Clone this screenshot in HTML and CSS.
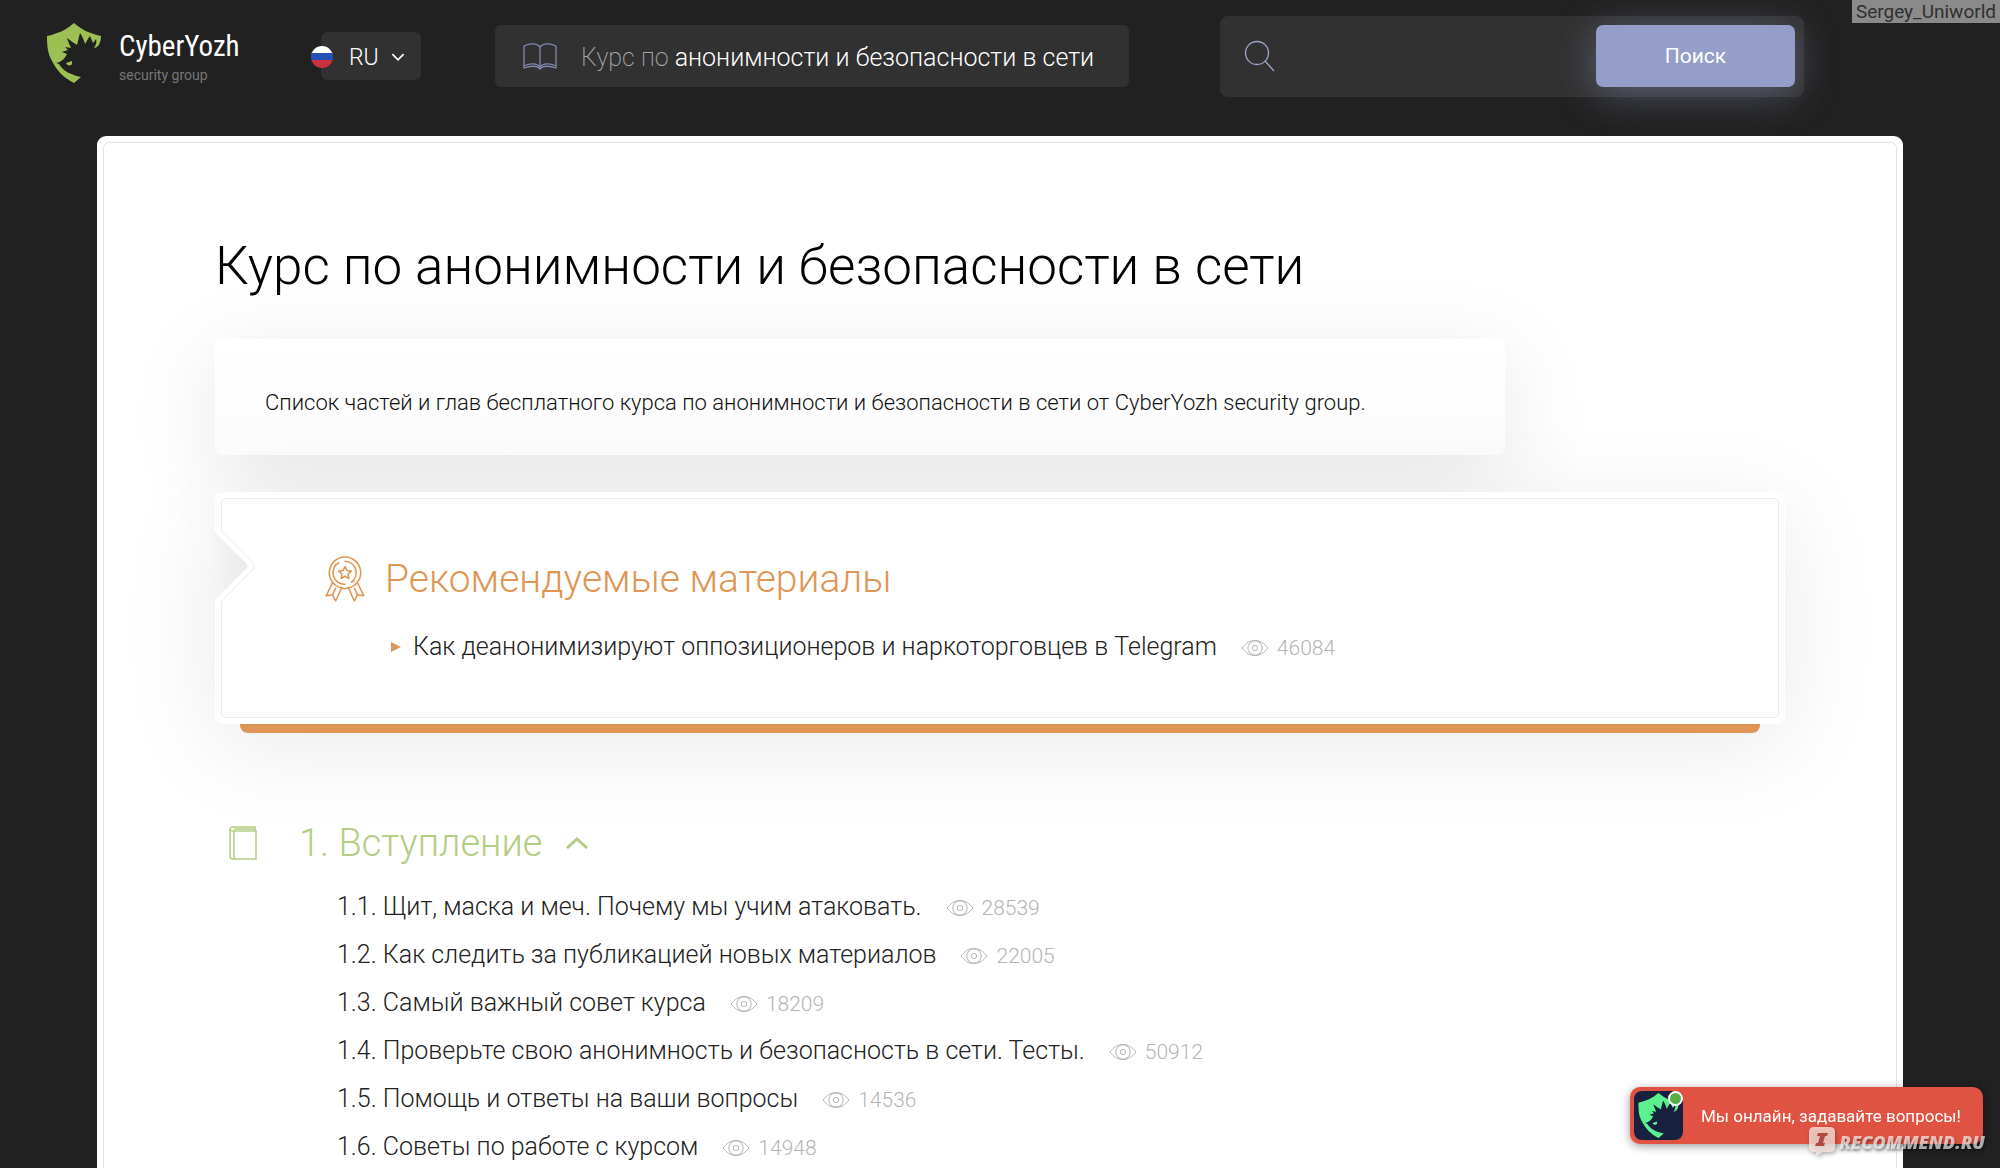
FILE: index.html
```html
<!DOCTYPE html>
<html lang="ru">
<head>
<meta charset="utf-8">
<title>Курс по анонимности и безопасности в сети</title>
<link rel="stylesheet" href="styles.css">
</head>
<body>
<svg class="sprite" aria-hidden="true">
  <symbol id="eye" viewBox="0 0 28 18">
    <path d="M1 9C5 4 9 1.500 14 1.500S23 4 27 9C23 14 19 16.500 14 16.500S5 14 1 9Z"/>
    <circle cx="14" cy="9" r="7.200"/>
    <circle cx="14" cy="9" r="2.600"/>
  </symbol>
  <symbol id="shield" viewBox="0 0 54 60">
    <path d="M27 0C19 7 10 11 0 13C0 24 1 31 5 38C10 48 17 55 27 60L34 54C24 52 16 48 12 41L9 40C15 39 18 35 20 31L15 29L21 27L18 24L24 25C23 22 21 19 20 15C24 18 27 20 30 22C31 18 32 14 33 10C36 14 37 18 38 21C40 18 41 15 43 13L46 20L49 16C50 19 49 22 47 25C51 25 54 20 54 13C44 11 35 7 27 0Z"/>
    <path d="M25 38L19 40C20 43 24 43 25 41Z"/>
  </symbol>
</svg>

<header class="top">
  <a class="logo" href="#">
    <svg class="logo-mark" aria-hidden="true"><use href="#shield"/></svg>
    <span class="logo-text">
      <span class="logo-name">CyberYozh</span>
      <span class="logo-sub">security group</span>
    </span>
  </a>
  <button class="lang" type="button">
    <svg class="flag" viewBox="0 0 22 22" aria-hidden="true">
      <clipPath id="round"><circle cx="11" cy="11" r="11"/></clipPath>
      <g clip-path="url(#round)">
        <rect width="22" height="8" fill="#fff"/>
        <rect y="7" width="22" height="8" fill="#2450b8"/>
        <rect y="14" width="22" height="8" fill="#c8313e"/>
      </g>
    </svg>
    RU
    <svg class="lang-arrow" viewBox="0 0 12 8" aria-hidden="true"><path d="M1 1l5 5 5-5"/></svg>
  </button>
  <a class="course" href="#">
    <svg class="course-icon" viewBox="0 0 34 28" aria-hidden="true">
      <path d="M17 4C14 0 7 0 1 3V25C6 23 14 22 17 26C20 22 28 23 33 25V3C27 0 20 0 17 4V24"/>
      <path d="M1 23C7 20 14 20 17 24C20 20 27 20 33 23"/>
    </svg>
    <span><span class="muted">Курс по</span> анонимности и безопасности в сети</span>
  </a>
  <form class="search" role="search">
    <label class="search-label" for="q" aria-label="Поиск по курсу">
      <svg class="search-icon" viewBox="0 0 32 32" aria-hidden="true"><circle cx="13" cy="13" r="11.500"/><path d="M21 21l9 10"/></svg>
    </label>
    <input class="search-input" id="q" type="text">
    <button class="search-button" type="button">Поиск</button>
  </form>
</header>

<main class="sheet">
  <div class="sheet-inner">
    <h1 class="title">Курс по анонимности и безопасности в сети</h1>
    <p class="intro">Список частей и глав бесплатного курса по анонимности и безопасности в сети от CyberYozh security group.</p>

    <section class="featured">
      <div class="featured-frame">
        <h2 class="featured-title">
          <svg class="award" viewBox="0 0 38 44" aria-hidden="true">
            <circle cx="19" cy="16" r="15"/>
            <path d="M13 6.500A11 11 0 0 0 19 27M25 25A11 11 0 0 0 19 5M10 8l.5.500M27 24l.5.500"/>
            <path d="M19 10l1.800 3.900 4.200.5-3.100 2.900.8 4.200-3.700-2.100-3.700 2.100.8-4.200-3.100-2.900 4.200-.5Z"/>
            <path d="M7 26L1 38l6-1 3 6 6-13M31 26l6 12-6-1-3 6-6-13M10 31l-3 6M28 31l3 6"/>
          </svg>
          Рекомендуемые материалы
        </h2>
        <ul class="featured-list">
          <li class="row"><a class="link" href="#">Как деанонимизируют оппозиционеров и наркоторговцев в Telegram</a><span class="views"><svg class="eye" aria-hidden="true"><use href="#eye"/></svg>46084</span></li>
        </ul>
      </div>
      <svg class="notch" viewBox="0 0 44 84" aria-hidden="true">
        <linearGradient id="shade"><stop offset="0" stop-color="#f4f4f4"/><stop offset="1" stop-color="#ebebeb"/></linearGradient>
        <path class="notch-cover" d="M0 6H8V78H0Z"/>
        <path d="M0 8L31 39Q34 42 31 45L0 76Z" fill="url(#shade)"/>
        <path class="notch-line" d="M6 5V6L38 39Q41 42 38 45L6 78V79"/>
      </svg>
    </section>

    <section class="part">
      <h2 class="part-title">
        <svg class="part-icon" viewBox="0 0 28 34" aria-hidden="true"><path d="M26 5V1H4Q1 1 1 4V30Q1 33 4 33H27V5H4Q1 5 1 3M5 5V33M5 3H26"/></svg>
        1. Вступление
        <svg class="part-arrow" viewBox="0 0 22 12" aria-hidden="true"><path d="M1 11L11 2l10 9"/></svg>
      </h2>
      <ul class="chapters">
        <li class="row"><a class="link" href="#">1.1. Щит, маска и меч. Почему мы учим атаковать.</a><span class="views"><svg class="eye" aria-hidden="true"><use href="#eye"/></svg>28539</span></li>
        <li class="row"><a class="link" href="#">1.2. Как следить за публикацией новых материалов</a><span class="views"><svg class="eye" aria-hidden="true"><use href="#eye"/></svg>22005</span></li>
        <li class="row"><a class="link" href="#">1.3. Самый важный совет курса</a><span class="views"><svg class="eye" aria-hidden="true"><use href="#eye"/></svg>18209</span></li>
        <li class="row"><a class="link" href="#">1.4. Проверьте свою анонимность и безопасность в сети. Тесты.</a><span class="views"><svg class="eye" aria-hidden="true"><use href="#eye"/></svg>50912</span></li>
        <li class="row"><a class="link" href="#">1.5. Помощь и ответы на ваши вопросы</a><span class="views"><svg class="eye" aria-hidden="true"><use href="#eye"/></svg>14536</span></li>
        <li class="row"><a class="link" href="#">1.6. Советы по работе с курсом</a><span class="views"><svg class="eye" aria-hidden="true"><use href="#eye"/></svg>14948</span></li>
      </ul>
    </section>
  </div>
</main>

<div class="author">Sergey_Uniworld</div>

<button class="chat" type="button">
  <span class="avatar">
    <svg class="avatar-mark" viewBox="0 0 54 60" aria-hidden="true"><use href="#shield"/></svg>
    <span class="online"></span>
  </span>
  Мы онлайн, задавайте вопросы!
</button>

<div class="stamp">
  <svg class="stamp-icon" viewBox="0 0 26 29" aria-hidden="true">
    <path class="stamp-bubble" d="M5 0H21Q26 0 26 5V20Q26 25 21 25H14L7 29V25H5Q0 25 0 20V5Q0 0 5 0Z"/>
    <path class="stamp-i" d="M9 6H19L18 9H16L14 16H16L15 19H6L7 16H9L11 9H8Z"/>
  </svg>
  RECOMMEND.RU
</div>
</body>
</html>
```
FILE: styles.css
```css
* { box-sizing: border-box; }

body {
  margin: 0;
  min-height: 100vh;
  display: flex;
  flex-direction: column;
  background: #212121;
  font-family: Roboto, "Open Sans", sans-serif;
  font-weight: 300;
  color: #222;
}

a { color: inherit; text-decoration: none; }
h1, h2, p, ul { margin: 0; padding: 0; font-weight: 300; }
ul { list-style: none; }
svg { flex: none; fill: none; }
button { border: 0; font: inherit; cursor: pointer; }
.sprite { position: absolute; width: 0; height: 0; }

/* header */
.top {
  display: flex;
  align-items: center;
  height: 112px;
  margin-bottom: 24px;
  padding: 0 196px 0 47px;
}
.logo { display: flex; align-items: center; gap: 18px; width: 274px; padding-bottom: 6px; }
.logo-mark { width: 54px; height: 60px; fill: #9dc054; }
.logo-text { display: flex; flex-direction: column; padding-top: 12px; }
.logo-name {
  font-family: "Roboto Condensed", "Liberation Sans Narrow", Roboto, sans-serif;
  font-size: 29px;
  line-height: 32px;
  font-weight: 400;
  color: #fff;
}
.logo-sub { font-size: 14px; line-height: 26px; font-weight: 400; color: #777; }

.lang {
  position: relative;
  display: flex;
  align-items: center;
  justify-content: space-between;
  width: 100px;
  height: 48px;
  margin-right: 74px;
  padding: 2px 16px 0 28px;
  border-radius: 6px;
  background: #313131;
  color: #fff;
  font-size: 23px;
}
.flag { position: absolute; left: -10px; top: 14px; width: 22px; height: 22px; }
.lang-arrow { width: 14px; height: 9px; stroke: #fff; stroke-width: 1.5; }

.course {
  display: flex;
  align-items: center;
  gap: 24px;
  height: 62px;
  width: 634px;
  margin-right: 91px;
  padding: 2px 0 0 28px;
  border-radius: 6px;
  background: #313131;
  color: #fff;
  font-size: 25px;
  white-space: nowrap;
}
.course-icon { width: 34px; height: 28px; stroke: #8087ad; stroke-width: 1.3; }
.muted { color: #a8a8a8; font-weight: 200; }

.search {
  flex: 1;
  display: flex;
  align-items: center;
  height: 81px;
  padding: 0 9px 0 24px;
  border-radius: 8px;
  background: #313131;
}
.search-icon { display: block; width: 32px; height: 32px; stroke: #9da5cc; stroke-width: 1.3; }
.search-input {
  flex: 1;
  min-width: 0;
  height: 60px;
  border: 0;
  outline: 0;
  padding: 0 20px;
  background: transparent;
  color: #fff;
  font: inherit;
  font-size: 20px;
}
.search-button {
  width: 199px;
  height: 62px;
  border-radius: 7px;
  background: #949ec8;
  box-shadow: 0 6px 40px rgba(148, 158, 200, .45);
  color: #fff;
  font-size: 21px;
  font-weight: 400;
}

/* sheet */
.sheet {
  flex: 1;
  display: flex;
  flex-direction: column;
  margin: 0 97px;
  padding: 6px 6px 0;
  border-radius: 9px 9px 0 0;
  background: #fff;
}
.sheet-inner {
  flex: 1;
  padding: 90px 111px 0;
  border: 1px solid #e4e4e4;
  border-bottom: 0;
  border-radius: 6px 6px 0 0;
}
.title { font-size: 53px; line-height: 66px; color: #000; }
.intro {
  max-width: 1290px;
  margin-top: 40px;
  padding: 49px 50px 37px;
  border-radius: 8px;
  background: linear-gradient(#fff, #fcfcfc);
  box-shadow: 0 20px 90px rgba(0, 0, 0, .1);
  font-size: 22px;
  line-height: 30px;
  color: #111;
}

.featured {
  position: relative;
  margin: 37px 0 94px;
  padding: 6px;
  border-radius: 8px;
  background: #fff;
  box-shadow: 0 20px 100px rgba(0, 0, 0, .09);
}
.featured::after {
  content: "";
  position: absolute;
  left: 25px;
  right: 25px;
  top: 100%;
  height: 9px;
  border-radius: 0 0 8px 8px;
  background: #df9655;
}
.featured-frame {
  padding: 55px 0 55px 103px;
  border: 1px solid #ececec;
  border-radius: 5px;
}
.featured-title {
  display: flex;
  align-items: center;
  gap: 20px;
  font-size: 39px;
  line-height: 50px;
  color: #df9655;
}
.award { width: 40px; height: 46px; stroke: #df9655; stroke-width: 1.5; stroke-linejoin: round; stroke-linecap: round; }
.featured-list { margin-top: 28px; padding-left: 66px; }
.featured-list .row::before {
  content: "";
  margin-right: 12px;
  border-left: 10px solid #df9655;
  border-top: 5px solid transparent;
  border-bottom: 5px solid transparent;
}
.notch { position: absolute; left: 0; top: 32px; width: 44px; height: 84px; }
.notch-cover { fill: #fff; }
.notch-line { stroke: #ececec; }

/* parts */
.part { padding-left: 14px; }
.part-title {
  display: flex;
  align-items: center;
  font-size: 38px;
  line-height: 50px;
  color: #b4cd84;
}
.part-icon { width: 28px; height: 34px; margin-right: 42px; stroke: #b4cd84; stroke-width: 1.5; }
.part-arrow { width: 22px; height: 12px; margin-left: 24px; stroke: #b4cd84; stroke-width: 3; }
.chapters { display: grid; gap: 18px; margin-top: 24px; padding-left: 108px; }
.row { display: flex; align-items: center; line-height: 30px; }
.link { font-size: 25px; }
.views { display: flex; align-items: center; gap: 8px; margin-left: 24px; padding-top: 2px; font-size: 21px; line-height: 28px; color: #b4b4b4; }
.eye { width: 28px; height: 18px; stroke: #b4b4b4; stroke-width: 1; }

/* overlays */
.author {
  position: fixed;
  top: 0;
  right: 0;
  padding: 0 4px;
  background: #8a8a8a;
  color: #303030;
  font-size: 19px;
  line-height: 23px;
  font-weight: 400;
}
.chat {
  position: fixed;
  right: 17px;
  bottom: 24px;
  display: flex;
  align-items: center;
  gap: 18px;
  width: 353px;
  height: 57px;
  padding: 0 4px;
  border-radius: 10px;
  background: #e05343;
  box-shadow: 0 2px 10px rgba(0, 0, 0, .4);
  color: #fff;
  font-size: 17px;
  font-weight: 400;
  white-space: nowrap;
}
.avatar {
  position: relative;
  display: grid;
  place-items: center;
  width: 49px;
  height: 49px;
  border-radius: 8px;
  background: #17203f;
}
.avatar-mark { width: 41px; height: 45px; fill: #5df08f; }
.online {
  position: absolute;
  right: 0;
  top: 0;
  width: 15px;
  height: 15px;
  border: 2px solid #fff;
  border-radius: 50%;
  background: #56ae46;
}
.stamp {
  position: fixed;
  right: 15px;
  bottom: 12px;
  display: flex;
  align-items: center;
  gap: 4px;
  color: rgba(255, 255, 255, .65);
  font-family: "Open Sans", sans-serif;
  font-size: 18px;
  line-height: 28px;
  font-weight: 800;
  font-style: italic;
  text-shadow: 1px 2px 3px rgba(0, 0, 0, .4);
}
.stamp-icon { width: 26px; height: 29px; filter: drop-shadow(1px 2px 2px rgba(0, 0, 0, .4)); }
.stamp-bubble { fill: rgba(255, 235, 230, .75); }
.stamp-i { fill: #b04a40; }
```
